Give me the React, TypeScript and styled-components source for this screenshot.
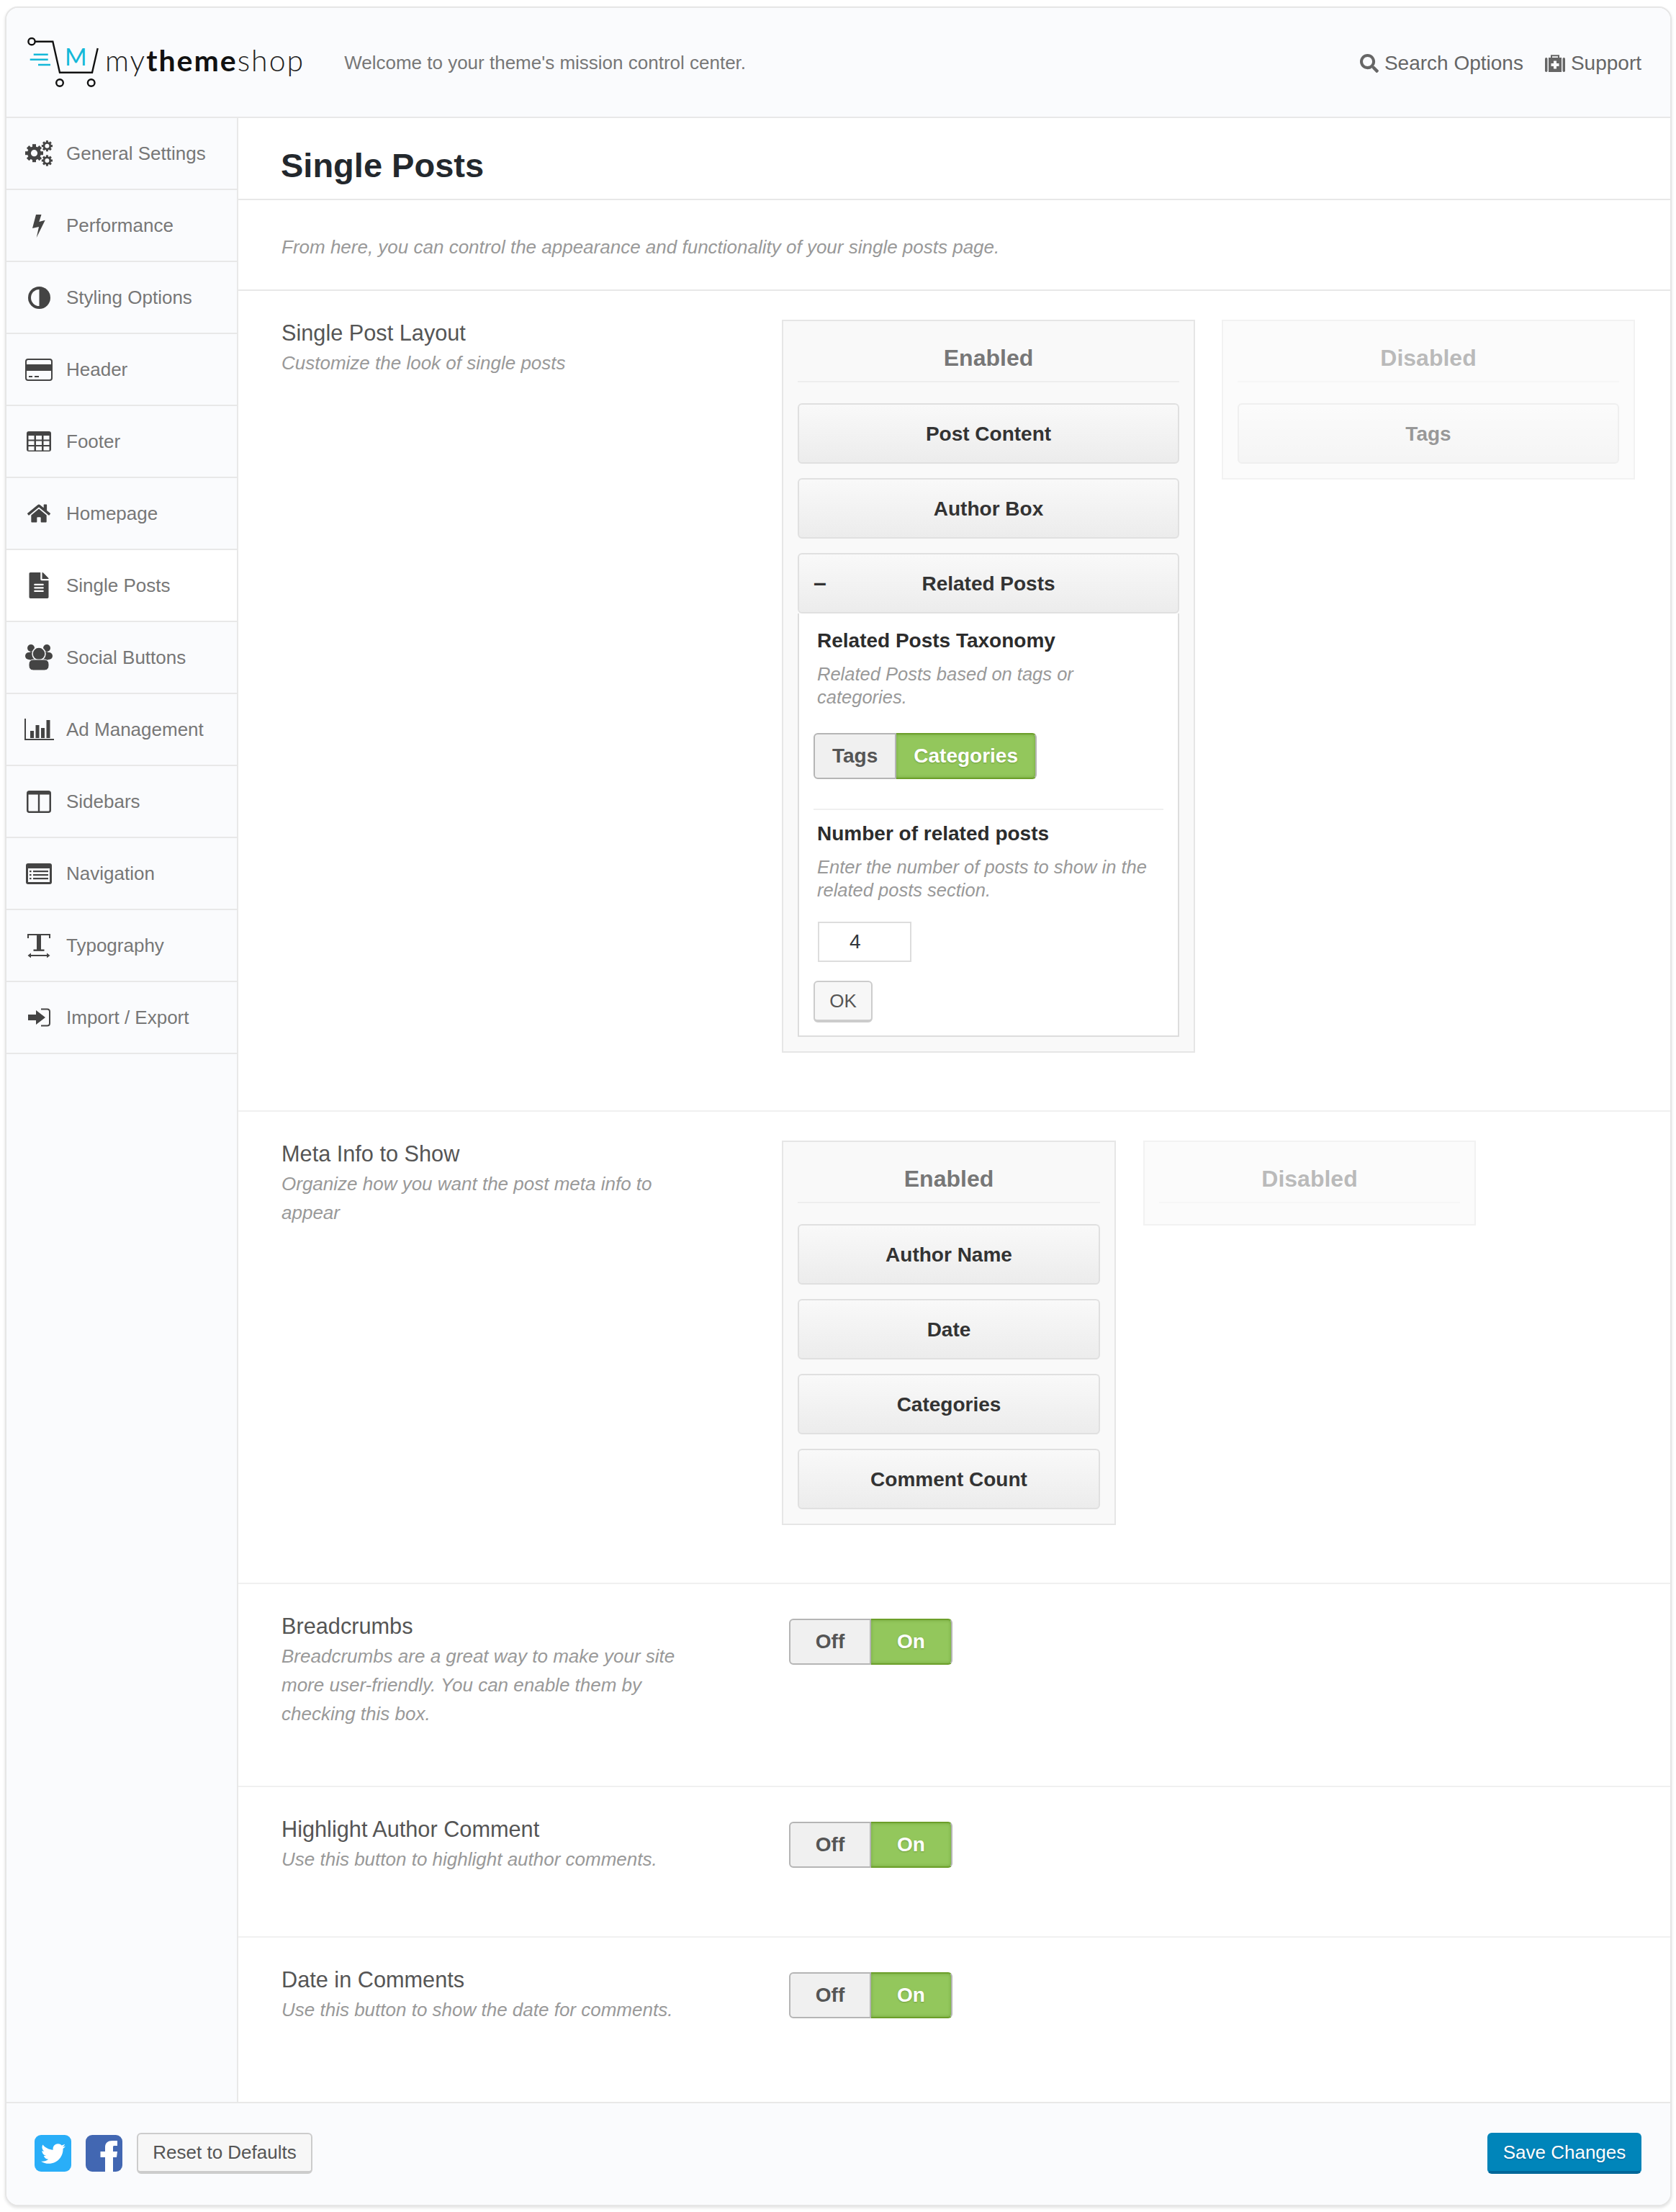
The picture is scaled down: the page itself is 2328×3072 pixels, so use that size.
import React from 'react';
import styled, {createGlobalStyle} from 'styled-components';
import {FaFileAlt, FaHome, FaSearch, FaTwitter} from 'react-icons/fa';

const GlobalStyle = createGlobalStyle`
    * {
        box-sizing: border-box;
    }
    body {
        margin: 0;
        background: #fff;
        font-family: "Liberation Sans", Arial, sans-serif;
    }
`

const Gear = ({x, y, r, hole, teeth}: {x: number, y: number, r: number, hole: number, teeth: number}) => (
    <g transform={`translate(${x} ${y})`}>
        {Array.from({length: teeth}, (_, i) => (
            <rect key={i} x={-r * .2} y={-r} width={r * .4} height={r * 2} transform={`rotate(${i * 180 / teeth})`} fill="currentColor"/>
        ))}
        <circle r={r * .76} fill="currentColor"/>
        <circle r={hole} fill="#fafbfd"/>
    </g>
)

const CogsIcon = () => (
    <svg width="38" height="36" viewBox="0 0 38 36">
        <Gear x={12.5} y={17.7} r={12.5} hole={4.6} teeth={4}/>
        <Gear x={30.4} y={7.7} r={7.6} hole={3} teeth={4}/>
        <Gear x={30.4} y={28} r={7.6} hole={3} teeth={4}/>
    </svg>
)

const BoltIcon = () => (
    <svg width="18" height="33" viewBox="0 0 18 33">
        <path d="M5 1H12.5L9.3 11L17.7 8.7L5.7 33L9 18L0 20Z" fill="currentColor"/>
    </svg>
)

const AdjustIcon = () => (
    <svg width="31" height="31" viewBox="0 0 31 31">
        <circle cx="15.5" cy="15.5" r="15.5" fill="currentColor"/>
        <path d="M15.5 4A11.5 11.5 0 0 0 15.5 27Z" fill="#fafbfd"/>
    </svg>
)

const HeaderIcon = () => (
    <svg width="38" height="31" viewBox="0 0 38 31">
        <rect x="1" y="1" width="36" height="29" rx="3" fill="none" stroke="currentColor" strokeWidth="2"/>
        <rect x="1" y="8" width="36" height="9" fill="currentColor"/>
        <rect x="5" y="24" width="5" height="2" fill="currentColor"/>
        <rect x="13" y="24" width="6" height="2" fill="currentColor"/>
    </svg>
)

const TableIcon = () => (
    <svg width="34" height="28" viewBox="0 0 34 28">
        <rect width="34" height="28" rx="3" fill="currentColor"/>
        {[6, 13.5, 21].map(y => [2.5, 13, 23.5].map(x => (
            <rect key={`${x}-${y}`} x={x} y={y} width="8" height="5.5" fill="#fafbfd"/>
        )))}
    </svg>
)

const UsersIcon = () => (
    <svg width="38" height="36" viewBox="0 0 38 36">
        <circle cx="8" cy="5" r="5" fill="currentColor"/>
        <circle cx="30" cy="5" r="5" fill="currentColor"/>
        <ellipse cx="5" cy="16" rx="5" ry="5" fill="currentColor"/>
        <ellipse cx="33" cy="16" rx="5" ry="5" fill="currentColor"/>
        <rect x="3" y="10" width="32" height="12" rx="6" fill="currentColor"/>
        <circle cx="19" cy="13" r="9" fill="currentColor" stroke="#fafbfd" strokeWidth="1.5"/>
        <rect x="5" y="21" width="28" height="15" rx="6" fill="currentColor" stroke="#fafbfd" strokeWidth="1"/>
    </svg>
)

const ChartIcon = () => (
    <svg width="41" height="30" viewBox="0 0 41 30">
        <path d="M1 0V29H41" fill="none" stroke="currentColor" strokeWidth="2"/>
        <rect x="8" y="17" width="5" height="10" fill="currentColor"/>
        <rect x="15.5" y="9" width="5" height="18" fill="currentColor"/>
        <rect x="23" y="13" width="5" height="14" fill="currentColor"/>
        <rect x="30.5" y="2" width="5" height="25" fill="currentColor"/>
    </svg>
)

const ColumnsIcon = () => (
    <svg width="34" height="31" viewBox="0 0 34 31">
        <rect x="1.25" y="1.25" width="31.5" height="28.5" rx="2.5" fill="none" stroke="currentColor" strokeWidth="2.5"/>
        <rect x="1" y="1" width="32" height="4.5" fill="currentColor"/>
        <rect x="15.8" y="3" width="2.4" height="26" fill="currentColor"/>
    </svg>
)

const ListIcon = () => (
    <svg width="36" height="29" viewBox="0 0 36 29">
        <rect width="36" height="29" rx="3" fill="currentColor"/>
        <rect x="3" y="7" width="30" height="19" fill="#fafbfd"/>
        {[10, 15, 20].map(y => (
            <g key={y} fill="currentColor">
                <rect x="5" y={y} width="2.5" height="2.2"/>
                <rect x="10" y={y} width="21" height="2.2"/>
            </g>
        ))}
    </svg>
)

const TypeIcon = () => (
    <svg width="32" height="33" viewBox="0 0 32 33">
        <path d="M1 6V1H31V6" fill="none" stroke="currentColor" strokeWidth="2"/>
        <rect x="13" y="1" width="6" height="22" fill="currentColor"/>
        <rect x="8.5" y="21.5" width="15" height="2.4" fill="currentColor"/>
        <path d="M3 30H29" stroke="currentColor" strokeWidth="2"/>
        <path d="M0.5 30L5 26.5V33.5ZM31.5 30L27 26.5V33.5Z" fill="currentColor"/>
    </svg>
)

const ImportIcon = () => (
    <svg width="31" height="26" viewBox="0 0 31 26">
        <path d="M0 9H11V3L24 13L11 23V17H0Z" fill="currentColor"/>
        <path d="M18 1.5H26.5Q30 1.5 30 5V21Q30 24.5 26.5 24.5H18" fill="none" stroke="currentColor" strokeWidth="2"/>
    </svg>
)

const MedkitIcon = () => (
    <svg width="28" height="24" viewBox="0 0 28 24">
        <rect x="0" y="4" width="3.5" height="20" rx="1.7" fill="currentColor"/>
        <rect x="24.5" y="4" width="3.5" height="20" rx="1.7" fill="currentColor"/>
        <rect x="5" y="4" width="18" height="20" fill="currentColor"/>
        <path d="M9 5V1.2H19V5" fill="none" stroke="currentColor" strokeWidth="2"/>
        <path d="M12 8.5H16V12H19.5V16H16V19.5H12V16H8.5V12H12Z" fill="#fafbfd"/>
    </svg>
)

const FacebookIcon = () => (
    <svg width="51" height="51" viewBox="0 0 51 51">
        <rect width="51" height="51" rx="9" fill="#4267b2"/>
        <path d="M27 51V31H20.5V23H27V17C27 11 31 8 37 8H44V15H39.5C38 15 38 16 38 18V23H44L43 31H38V51Z" fill="#fff"/>
    </svg>
)

const navItems: {label: string, icon: React.ReactNode, active?: boolean}[] = [
    {label: 'General Settings', icon: <CogsIcon/>},
    {label: 'Performance', icon: <BoltIcon/>},
    {label: 'Styling Options', icon: <AdjustIcon/>},
    {label: 'Header', icon: <HeaderIcon/>},
    {label: 'Footer', icon: <TableIcon/>},
    {label: 'Homepage', icon: <FaHome size={32}/>},
    {label: 'Single Posts', icon: <FaFileAlt size={36}/>, active: true},
    {label: 'Social Buttons', icon: <UsersIcon/>},
    {label: 'Ad Management', icon: <ChartIcon/>},
    {label: 'Sidebars', icon: <ColumnsIcon/>},
    {label: 'Navigation', icon: <ListIcon/>},
    {label: 'Typography', icon: <TypeIcon/>},
    {label: 'Import / Export', icon: <ImportIcon/>},
]

const Toggle = ({off, on}: {off: string, on: string}) => (
    <ToggleWrap>
        <ToggleOff>{off}</ToggleOff>
        <ToggleOn>{on}</ToggleOn>
    </ToggleWrap>
)

export default function App() {
    return (
        <Frame>
            <GlobalStyle/>
            <TopBar>
                <Logo>
                    <svg width="100" height="70" viewBox="38 52 100 70">
                        <g fill="none" stroke="#111" strokeWidth="2.4">
                            <circle cx="44" cy="57.7" r="4.6"/>
                            <path d="M49 57.7H73.3L83 100.7H128L135.7 67"/>
                            <circle cx="83" cy="115" r="4.8"/>
                            <circle cx="126.7" cy="115" r="4.8"/>
                        </g>
                        <g stroke="#14b8d8" strokeWidth="2.6">
                            <path d="M46.7 75.7H66.7M41.7 82.7H66.7M53 90H70"/>
                        </g>
                        <text x="105.3" y="91" fill="#14b8d8" fontFamily="Lato, sans-serif" fontSize="33" textAnchor="middle">M</text>
                    </svg>
                    <WordMark>my<b>theme</b>shop</WordMark>
                </Logo>
                <Welcome>Welcome to your theme's mission control center.</Welcome>
                <TopLinks>
                    <TopLink><FaSearch size={26}/>Search Options</TopLink>
                    <TopLink><MedkitIcon/>Support</TopLink>
                </TopLinks>
            </TopBar>
            <Body>
                <Sidebar>
                    {navItems.map(item => (
                        <NavItem key={item.label} $active={item.active}>
                            <NavIcon>{item.icon}</NavIcon>
                            {item.label}
                        </NavItem>
                    ))}
                </Sidebar>
                <Main>
                    <PageTitle>Single Posts</PageTitle>
                    <PageIntro>From here, you can control the appearance and functionality of your single posts page.</PageIntro>

                    <Section $pb={80}>
                        <Info>
                            <Title>Single Post Layout</Title>
                            <Desc>Customize the look of single posts</Desc>
                        </Info>
                        <Sorter>
                            <Box $w={574}>
                                <BoxTitle>Enabled</BoxTitle>
                                <Item>Post Content</Item>
                                <Item>Author Box</Item>
                                <Item>
                                    <Minus>–</Minus>
                                    Related Posts
                                </Item>
                                <Panel>
                                    <PanelHeading>Related Posts Taxonomy</PanelHeading>
                                    <PanelDesc>Related Posts based on tags or categories.</PanelDesc>
                                    <PanelToggle>
                                        <Toggle off="Tags" on="Categories"/>
                                    </PanelToggle>
                                    <PanelRule/>
                                    <PanelHeading $second>Number of related posts</PanelHeading>
                                    <PanelDesc>Enter the number of posts to show in the related posts section.</PanelDesc>
                                    <NumberInput>4</NumberInput>
                                    <OkButton>OK</OkButton>
                                </Panel>
                            </Box>
                            <Box $w={574} $disabled>
                                <BoxTitle>Disabled</BoxTitle>
                                <Item>Tags</Item>
                            </Box>
                        </Sorter>
                    </Section>

                    <Section $pb={80}>
                        <Info>
                            <Title>Meta Info to Show</Title>
                            <Desc>Organize how you want the post meta info to appear</Desc>
                        </Info>
                        <Sorter $wide>
                            <Box $w={464}>
                                <BoxTitle>Enabled</BoxTitle>
                                <Item>Author Name</Item>
                                <Item>Date</Item>
                                <Item>Categories</Item>
                                <Item>Comment Count</Item>
                            </Box>
                            <Box $w={462} $disabled $empty>
                                <BoxTitle>Disabled</BoxTitle>
                            </Box>
                        </Sorter>
                    </Section>

                    <Section $pb={80}>
                        <Info>
                            <Title>Breadcrumbs</Title>
                            <Desc>Breadcrumbs are a great way to make your site more user-friendly. You can enable them by checking this box.</Desc>
                        </Info>
                        <SwitchCell><Toggle off="Off" on="On"/></SwitchCell>
                    </Section>

                    <Section $pb={87}>
                        <Info>
                            <Title>Highlight Author Comment</Title>
                            <Desc>Use this button to highlight author comments.</Desc>
                        </Info>
                        <SwitchCell><Toggle off="Off" on="On"/></SwitchCell>
                    </Section>

                    <Section $pb={60} $last>
                        <Info>
                            <Title>Date in Comments</Title>
                            <Desc>Use this button to show the date for comments.</Desc>
                        </Info>
                        <SwitchCell><Toggle off="Off" on="On"/></SwitchCell>
                    </Section>
                </Main>
            </Body>
            <BottomBar>
                <BottomLeft>
                    <TwitterSquare><FaTwitter size={34}/></TwitterSquare>
                    <FacebookIcon/>
                    <ResetButton>Reset to Defaults</ResetButton>
                </BottomLeft>
                <SaveButton>Save Changes</SaveButton>
            </BottomBar>
        </Frame>
    );
}

const Frame = styled.div`
    display: flex;
    flex-direction: column;
    width: 2315px;
    height: 3055px;
    margin: 9px 6px 8px 7px;
    border: 2px solid #e6e6e6;
    border-radius: 18px;
    box-shadow: 0 2px 4px rgba(0, 0, 0, .12);
    background: #fff;
    overflow: hidden;
`

const TopBar = styled.header`
    display: flex;
    align-items: center;
    flex: none;
    height: 153px;
    padding: 0 40px 0 29px;
    border-bottom: 2px solid #e8e8e8;
    background: #fafbfd;
`

const Logo = styled.div`
    display: flex;
    align-items: center;
    gap: 8px;
`

const WordMark = styled.span`
    margin-top: -6px;
    font-family: Lato, "Open Sans", sans-serif;
    font-size: 41px;
    font-weight: 300;
    color: #222;
    letter-spacing: 2px;

    b {
        font-weight: 700;
        color: #111;
    }
`

const Welcome = styled.div`
    margin: 2px 0 0 55px;
    font-size: 26px;
    color: #777;
`

const TopLinks = styled.div`
    display: flex;
    gap: 30px;
    margin: 2px 0 0 auto;
`

const TopLink = styled.span`
    display: flex;
    align-items: center;
    gap: 8px;
    font-size: 28px;
    color: #666;
`

const Body = styled.div`
    display: flex;
    flex: 1;
    min-height: 0;
`

const Sidebar = styled.nav`
    flex: none;
    width: 322px;
    border-right: 2px solid #e8e8e8;
    background: #fafbfd;
`

const NavItem = styled.div<{$active?: boolean}>`
    display: flex;
    align-items: center;
    height: 100px;
    padding-left: 24px;
    border-bottom: 2px solid #e8e8e8;
    background: ${props => props.$active ? '#fff' : 'transparent'};
    font-size: 26px;
    color: #777;
`

const NavIcon = styled.span`
    display: flex;
    justify-content: center;
    align-items: center;
    width: 42px;
    margin-right: 17px;
    color: #444;
`

const Main = styled.main`
    flex: 1;
    min-width: 0;
`

const PageTitle = styled.h1`
    height: 114px;
    margin: 0;
    padding: 39px 0 0 59px;
    border-bottom: 2px solid #e8e8e8;
    font-size: 47px;
    line-height: 54px;
    color: #23282d;
`

const PageIntro = styled.p`
    height: 126px;
    margin: 0;
    padding: 47px 0 0 60px;
    border-bottom: 2px solid #e8e8e8;
    font-size: 26px;
    line-height: 36px;
    font-style: italic;
    color: #999;
`

const Section = styled.section<{$pb: number, $last?: boolean}>`
    display: flex;
    padding: 40px 0 ${props => props.$pb}px 60px;
    border-bottom: ${props => props.$last ? 'none' : '2px solid #f0f0f0'};
`

const Info = styled.div`
    flex: none;
    width: 695px;
`

const Title = styled.div`
    margin-bottom: 2px;
    font-size: 30.7px;
    line-height: 38px;
    color: #555;
`

const Desc = styled.div`
    width: 570px;
    font-size: 26px;
    line-height: 40px;
    font-style: italic;
    color: #999;
`

const Sorter = styled.div<{$wide?: boolean}>`
    display: flex;
    align-items: flex-start;
    gap: ${props => props.$wide ? 38 : 37}px;
`

const Box = styled.div<{$w: number, $disabled?: boolean, $empty?: boolean}>`
    width: ${props => props.$w}px;
    padding: 0 20px ${props => props.$empty ? 0 : 20}px;
    border: 2px solid #e6e6e6;
    background: #f9f9f9;
    opacity: ${props => props.$disabled ? .5 : 1};
`

const BoxTitle = styled.div`
    height: 85px;
    padding-top: 31px;
    margin-bottom: 29px;
    border-bottom: 2px solid #eee;
    text-align: center;
    font-size: 32px;
    line-height: 40px;
    font-weight: bold;
    color: #777;
`

const Item = styled.div`
    position: relative;
    display: flex;
    align-items: center;
    justify-content: center;
    height: 84px;
    margin-bottom: 20px;
    padding-top: 1px;
    border: 2px solid #e0e0e0;
    border-radius: 6px;
    background: linear-gradient(#f9f9f9, #ececec);
    font-size: 28px;
    font-weight: bold;
    color: #333;

    &:last-child {
        margin-bottom: 0;
    }
`

const Minus = styled.span`
    position: absolute;
    left: 20px;
    top: 21px;
    font-size: 32px;
    color: #333;
`

const Panel = styled.div`
    margin-top: -20px;
    padding: 21px 20px 18px;
    border: 2px solid #ddd;
    border-top: none;
    background: #fff;
`

const PanelHeading = styled.div<{$second?: boolean}>`
    padding-left: 5px;
    margin-top: ${props => props.$second ? '16px' : '0'};
    font-size: 28px;
    line-height: 34px;
    font-weight: bold;
    color: #2c2c2c;
`

const PanelDesc = styled.div`
    margin-top: 13px;
    padding-left: 5px;
    font-size: 25.5px;
    line-height: 32px;
    font-style: italic;
    color: #999;
`

const PanelToggle = styled.div`
    margin-top: 34px;
`

const PanelRule = styled.div`
    height: 2px;
    margin-top: 41px;
    background: #f0f0f0;
`

const NumberInput = styled.div`
    display: flex;
    align-items: center;
    width: 130px;
    height: 56px;
    margin: 28px 0 0 6px;
    padding-left: 42px;
    border: 2px solid #ddd;
    font-size: 28px;
    color: #32373c;
`

const OkButton = styled.div`
    display: flex;
    align-items: center;
    justify-content: center;
    width: 82px;
    height: 58px;
    margin-top: 26px;
    border: 2px solid #ccc;
    border-bottom-width: 4px;
    border-radius: 6px;
    background: #f7f7f7;
    font-size: 26px;
    color: #555;
`

const SwitchCell = styled.div`
    margin: 8px 0 0 10px;
`

const ToggleWrap = styled.div`
    display: inline-flex;
    height: 64px;
    font-size: 28px;
    font-weight: bold;
`

const ToggleOff = styled.span`
    display: flex;
    align-items: center;
    justify-content: center;
    min-width: 114px;
    padding: 0 24px;
    border: 2px solid #b5b5b5;
    border-radius: 6px 0 0 6px;
    background: #f0f0f0;
    color: #555;
`

const ToggleOn = styled.span`
    display: flex;
    align-items: center;
    justify-content: center;
    min-width: 113px;
    padding: 0 24px;
    border-top: 2px solid #6c9f2a;
    border-bottom: 2px solid #6c9f2a;
    border-right: 2px solid #b5b5b5;
    border-radius: 0 6px 6px 0;
    background: #93c75c;
    box-shadow: inset 0 0 4px rgba(80, 130, 30, .5);
    color: #fff;
    text-shadow: 0 1px 2px rgba(80, 120, 30, .5);
`

const BottomBar = styled.footer`
    display: flex;
    align-items: center;
    justify-content: space-between;
    flex: none;
    height: 143px;
    padding: 0 40px 2px 39px;
    border-top: 2px solid #e8e8e8;
    background: #fafbfd;
`

const BottomLeft = styled.div`
    display: flex;
    align-items: center;
    gap: 20px;
`

const TwitterSquare = styled.span`
    display: flex;
    align-items: center;
    justify-content: center;
    width: 51px;
    height: 51px;
    border-radius: 9px;
    background: #29aef8;
    color: #fff;
`

const ResetButton = styled.div`
    display: flex;
    align-items: center;
    justify-content: center;
    width: 244px;
    height: 57px;
    border: 2px solid #ccc;
    border-bottom-width: 4px;
    border-radius: 6px;
    background: #f7f7f7;
    font-size: 26px;
    color: #555;
`

const SaveButton = styled.div`
    display: flex;
    align-items: center;
    justify-content: center;
    width: 214px;
    height: 57px;
    border: 2px solid #0083b8;
    border-bottom: 4px solid #006799;
    border-radius: 6px;
    background: #0085ba;
    font-size: 26px;
    color: #fff;
    text-shadow: 0 1px 2px #006799;
`
